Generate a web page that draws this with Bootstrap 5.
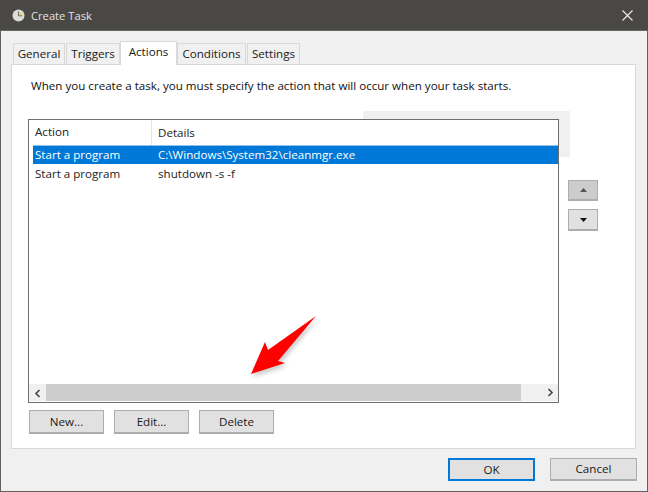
<!DOCTYPE html>
<html lang="en">
<head>
<meta charset="utf-8">
<title>Create Task</title>
<link rel="stylesheet" href="https://cdn.jsdelivr.net/npm/bootstrap@5.3.0/dist/css/bootstrap.min.css">
<style>
html,body{margin:0;width:648px;height:492px;overflow:hidden;background:#f0f0f0}
body{font-family:"Open Sans","Noto Sans",sans-serif;font-size:11.6px;line-height:16px;color:#1a1a1a}
.win{width:648px;height:492px;border:1px solid #5f5f5f;border-top:0;background:#f0f0f0;display:flex;flex-direction:column}
.ttl{height:31px;margin:0 -1px;background:#4a4845;color:#e4e4e4;font-size:11.2px;padding:1px 15px 0 12px;flex:none;border-bottom:1px solid #666}
.ttlicon{margin-right:6px;flex:none}
.pane{padding-top:10px}
.tabstrip{height:23px;padding-left:12px;border:0;align-items:flex-end;gap:1px;flex-wrap:nowrap}
.tabx{height:21px;background:#f0f0f0;border:1px solid #d9d9d9;border-bottom:0;color:#1a1a1a;padding:0;display:flex;align-items:center;justify-content:center;position:relative}
.tabx.on{height:24px;background:#fff;margin-bottom:-1px;z-index:2;margin-left:-1px;margin-right:-1px;padding-bottom:4px}
.panel{margin:0 11px 0 10px;height:385px;background:#fff;border:1px solid #d9d9d9;padding:13px 16px 0 16px;position:relative}
.desc{margin:0 0 0 3px;height:16px;line-height:16px;color:#111}
.ghost{position:absolute;left:351px;top:46px;width:207px;height:46px;background:#f0f0f0}
.mainrow{margin-top:25px;height:284px;gap:9px;position:relative}
.lv{width:531px;height:284px;border:1px solid #6e6e6e;background:#fff;position:relative;flex:none}
.lvhead{height:25px;display:flex;align-items:center;color:#222}
.c1{width:123px;padding-left:6px;border-right:1px solid #e5e5e5;height:25px;line-height:24px;flex:none}
.c2{padding-left:6px;line-height:24px}
.lvrow{height:19px;margin-left:4px;display:flex;line-height:19px;color:#222}
.lvrow .d1{width:125px;padding-left:2px;flex:none}
.lvrow.sel{background:#0078d7;color:#fff;border-top:1px solid #8fc1ea;line-height:18px}
.lvspacer{height:201px}
.sb{height:17px;background:#f0f0f0;display:flex;align-items:center}
.sbl{width:17px;flex:none;text-align:center}
.sbt{width:475px;height:17px;flex:none;background:#cdcdcd}
.sbr{width:37px;flex:none;display:flex;justify-content:flex-end;padding-right:4px}
.arrows{padding-top:61px;gap:8px;width:30px;flex:none}
.wbtn{background:#e1e1e1;border:2px solid #adadad;border-width:1px 1px 2px 1px;border-radius:0;color:#1a1a1a;font-size:11.6px;line-height:16px;padding:0;display:flex;align-items:center;justify-content:center}
.wbtn:hover{background:#e1e1e1;border-color:#adadad;color:#1a1a1a}
.upb{width:30px;height:21px;background:#ccc}
.upb:hover{background:#ccc}
.dnb{width:30px;height:22px}
.actions{margin-top:7px;gap:10px;padding-left:1px}
.ab{width:75px;height:24px}
.foot{padding:9px 10px 0 0;gap:15px}
.fb{width:87px;height:23px}
.fb.def,.fb.def:hover{border:2px solid #0078d7}
.pointer{position:absolute;left:239px;top:250px;width:70px;height:64px;z-index:3;filter:drop-shadow(2px 3px 2px rgba(0,0,0,.2))}
</style>
</head>
<body>
<div class="win">
  <div class="ttl d-flex align-items-center">
    <svg width="13" height="13" viewBox="0 0 13 13" class="ttlicon"><circle cx="6.5" cy="6.5" r="6" fill="#dcdcdc"/><path d="M6.5 2.2A4.3 4.3 0 0 1 10.8 6.5H6.5z" fill="#e8d48a"/><path d="M6.5 2.5V6.8H10" fill="none" stroke="#6e6a55" stroke-width="1"/></svg>
    <span>Create Task</span>
    <svg width="11" height="11" viewBox="0 0 11 11" class="ms-auto"><path d="M.5.5l10 10M10.5.5l-10 10" stroke="#eee" stroke-width="1.1" fill="none"/></svg>
  </div>
  <div class="pane">
    <ul class="nav tabstrip d-flex">
      <li class="tabx" style="width:52px">General</li>
      <li class="tabx" style="width:54px">Triggers</li>
      <li class="tabx on" style="width:57px">Actions</li>
      <li class="tabx" style="width:69px">Conditions</li>
      <li class="tabx" style="width:53px">Settings</li>
    </ul>
    <div class="panel">
      <div class="ghost"></div>
      <p class="desc position-relative">When you create a task, you must specify the action that will occur when your task starts.</p>
      <div class="mainrow d-flex">
        <div class="lv">
          <div class="lvhead"><div class="c1">Action</div><div class="c2">Details</div></div>
          <div class="lvrow sel"><div class="d1">Start a program</div><div>C:\Windows\System32\cleanmgr.exe</div></div>
          <div class="lvrow"><div class="d1">Start a program</div><div>shutdown -s -f</div></div>
          <div class="lvspacer"></div>
          <div class="sb">
            <div class="sbl"><svg width="7" height="9" viewBox="0 0 7 9"><path d="M5.5 1L2 4.5 5.5 8" fill="none" stroke="#444" stroke-width="1.6"/></svg></div>
            <div class="sbt"></div>
            <div class="sbr"><svg width="7" height="9" viewBox="0 0 7 9"><path d="M1.5 1L5 4.5 1.5 8" fill="none" stroke="#444" stroke-width="1.6"/></svg></div>
          </div>
        </div>
        <div class="arrows d-flex flex-column">
          <button class="btn wbtn upb" type="button" aria-label="Up"><svg width="7" height="4" viewBox="0 0 7 4"><path d="M3.5 0L7 4H0z" fill="#555"/></svg></button>
          <button class="btn wbtn dnb" type="button" aria-label="Down"><svg width="7" height="4" viewBox="0 0 7 4"><path d="M0 0H7L3.5 4z" fill="#111"/></svg></button>
        </div>
      </div>
      <div class="actions d-flex">
        <button class="btn wbtn ab" type="button">New...</button>
        <button class="btn wbtn ab" type="button">Edit...</button>
        <button class="btn wbtn ab" type="button">Delete</button>
      </div>
      <svg class="pointer" viewBox="0 0 70 64"><path d="M0 59L14 27 17 35 65 1 27 46 34 48z" fill="#f00"/></svg>
    </div>
    <div class="foot d-flex justify-content-end">
      <button class="btn wbtn fb def" type="button">OK</button>
      <button class="btn wbtn fb" type="button">Cancel</button>
    </div>
  </div>
</div>
<script src="https://cdn.jsdelivr.net/npm/bootstrap@5.3.0/dist/js/bootstrap.bundle.min.js"></script>
</body>
</html>
